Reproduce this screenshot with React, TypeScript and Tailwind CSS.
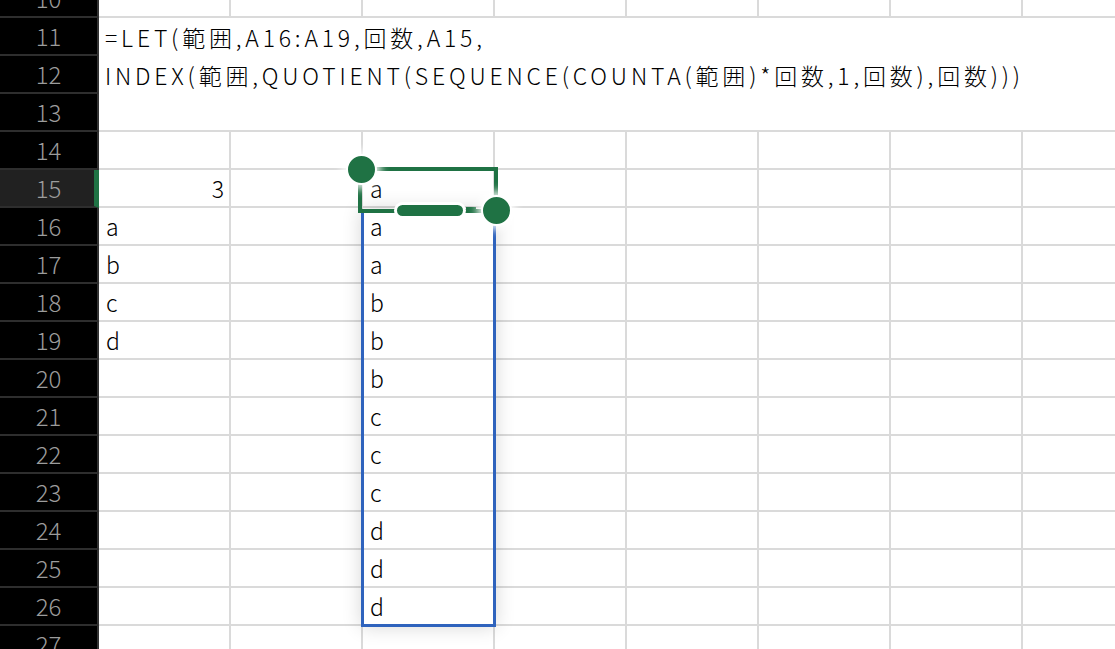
import React from 'react';

const font = { fontFamily: '"Noto Sans CJK JP", "Noto Sans", sans-serif' };

const colA: Record<number, string> = { 15: '3', 16: 'a', 17: 'b', 18: 'c', 19: 'd' };
const colC: Record<number, string> = {
  15: 'a', 16: 'a', 17: 'a', 18: 'b', 19: 'b', 20: 'b',
  21: 'c', 22: 'c', 23: 'c', 24: 'd', 25: 'd', 26: 'd',
};

const RowHeader = ({ n, active }: { n: number; active?: boolean }) => (
  <div
    className={`flex h-[38px] w-[99px] shrink-0 items-center justify-center border-b-2 border-b-[#2e2e2e] text-[24px] font-light text-[#9c9c9c] ${
      active ? 'border-r-[5px] border-r-[#1f7244] bg-[#212121] pl-[3px]' : 'border-r-2 border-r-[#333] bg-black'
    }`}
  >
    {n}
  </div>
);

const Cell = ({ children, right }: { children?: React.ReactNode; right?: boolean }) => (
  <div
    className={`flex h-[38px] w-[132px] shrink-0 items-center border-b-2 border-r-2 border-[#dadada] text-[23px] font-light text-black ${
      right ? 'justify-end pr-[5px]' : 'pl-[7px]'
    }`}
  >
    {children}
  </div>
);

const Row = ({ n }: { n: number }) => (
  <div className="flex">
    <RowHeader n={n} active={n === 15} />
    <Cell right={n === 15}>{colA[n]}</Cell>
    <Cell />
    <Cell>{colC[n]}</Cell>
    <Cell />
    <Cell />
    <Cell />
    <Cell />
    <Cell />
  </div>
);

export default function App() {
  const rows = [14, 15, 16, 17, 18, 19, 20, 21, 22, 23, 24, 25, 26, 27];
  return (
    <div className="relative h-[649px] w-[1115px] overflow-hidden bg-white" style={font}>
      <div className="-mt-[20px]">
        <Row n={10} />
        <div className="flex">
          <div className="flex w-[99px] shrink-0 flex-col">
            <RowHeader n={11} />
            <RowHeader n={12} />
            <RowHeader n={13} />
          </div>
          <div className="h-[114px] flex-1 border-b-2 border-[#dadada] pl-[6px] text-[23px] font-light leading-[38px] tracking-[3.8px] text-black">
            <div>=LET(範囲,A16:A19,回数,A15,</div>
            <div>INDEX(範囲,QUOTIENT(SEQUENCE(COUNTA(範囲)*回数,1,回数),回数)))</div>
          </div>
        </div>
        {rows.map((n) => (
          <Row key={n} n={n} />
        ))}
      </div>

      {/* selection overlay */}
      <div className="absolute left-[361px] top-[209px] h-[418px] w-[135px] border-[3px] border-[#2f63bd] shadow-[0_0_18px_rgba(0,0,0,0.16)]" />
      <div className="absolute left-[358px] top-[167px] h-[46px] w-[140px] border-[4px] border-[#1f7244]" />
      <div className="absolute left-[397px] top-[205px] h-[11px] w-[66px] rounded-full bg-[#1f7244] ring-[3px] ring-white" />
      <div className="absolute left-[466px] top-[207px] h-[6px] w-[10px] bg-[#1f7244]" />
      <div className="absolute left-[346px] top-[154px] h-[31px] w-[31px] rounded-full border-[2px] border-white bg-[#1f7244] shadow-[0_0_8px_4px_rgba(255,255,255,0.9)]" />
      <div className="absolute left-[481px] top-[195px] h-[31px] w-[31px] rounded-full border-[2px] border-white bg-[#1f7244] shadow-[0_0_8px_4px_rgba(255,255,255,0.9)]" />
    </div>
  );
}
